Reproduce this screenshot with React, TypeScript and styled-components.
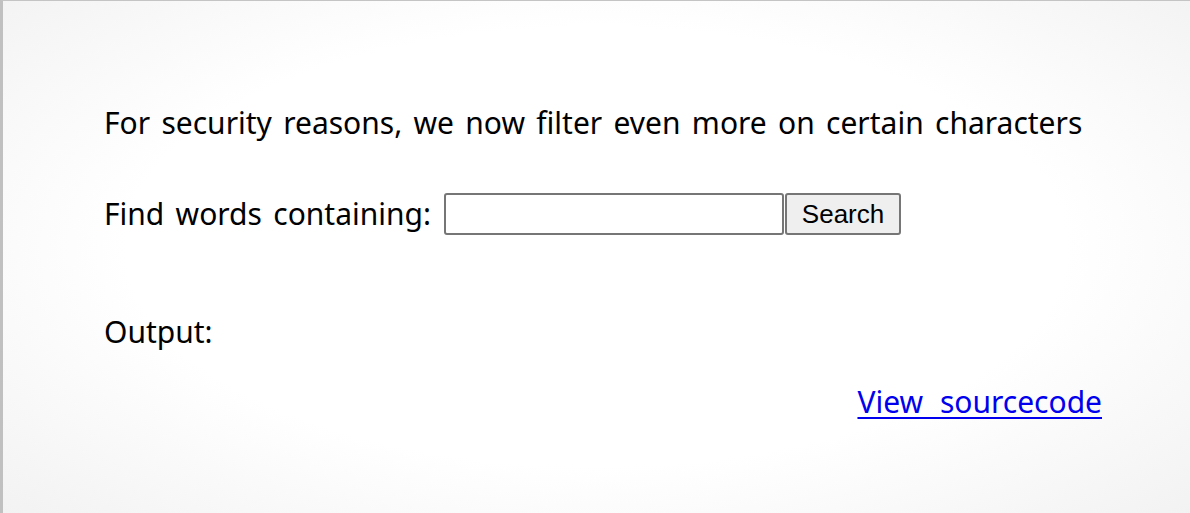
import styled, { createGlobalStyle } from "styled-components";

const GlobalStyle = createGlobalStyle`
  html, body {
    margin: 0;
    padding: 0;
    height: 100%;
  }
  body {
    font-family: "Noto Sans", "Open Sans", sans-serif;
    color: #000;
  }
`;

const Page = styled.div`
  box-sizing: border-box;
  height: 513px;
  border-top: 1px solid #c4c4c4;
  border-left: 3px solid #c0c0c0;
  background: radial-gradient(ellipse 72% 78% at 50% 48%, #ffffff 55%, #f1f1f1 100%);
  padding: 101px 88px 0 101px;
  font-size: 30px;
  line-height: 42px;
  word-spacing: 3.5px;
`;

const Line = styled.p<{ $gap?: number }>`
  margin: 0 0 ${(p) => p.$gap ?? 0}px 0;
`;

const Form = styled.form`
  display: flex;
  align-items: center;
  margin: 0 0 76px 0;
`;

const Label = styled.span`
  margin-right: 13px;
`;

const TextInput = styled.input`
  box-sizing: border-box;
  width: 340px;
  height: 42px;
  border: 2px solid #767676;
  border-radius: 3px;
  background: #fff;
  padding: 0 6px;
  font-size: 24px;
`;

const Button = styled.button`
  box-sizing: border-box;
  height: 42px;
  width: 116px;
  margin-left: 1px;
  border: 2px solid #767676;
  border-radius: 3px;
  background: #efefef;
  font-family: "Liberation Sans", Arial, sans-serif;
  font-size: 26px;
  word-spacing: 0;
  color: #000;
  padding: 0;
`;

const Footer = styled.div`
  display: flex;
  justify-content: flex-end;
  margin-top: 28px;
`;

const SourceLink = styled.a`
  color: #0000ee;
  text-decoration: underline;
  text-decoration-thickness: 2px;
  text-underline-offset: 4px;
  word-spacing: 9px;
`;

export default function App() {
  return (
    <>
      <GlobalStyle />
      <Page>
        <Line $gap={49}>For security reasons, we now filter even more on certain characters</Line>
        <Form onSubmit={(e) => e.preventDefault()}>
          <Label>Find words containing:</Label>
          <TextInput name="needle" />
          <Button type="submit">Search</Button>
        </Form>
        <Line>Output:</Line>
        <Footer>
          <SourceLink href="#">View sourcecode</SourceLink>
        </Footer>
      </Page>
    </>
  );
}
